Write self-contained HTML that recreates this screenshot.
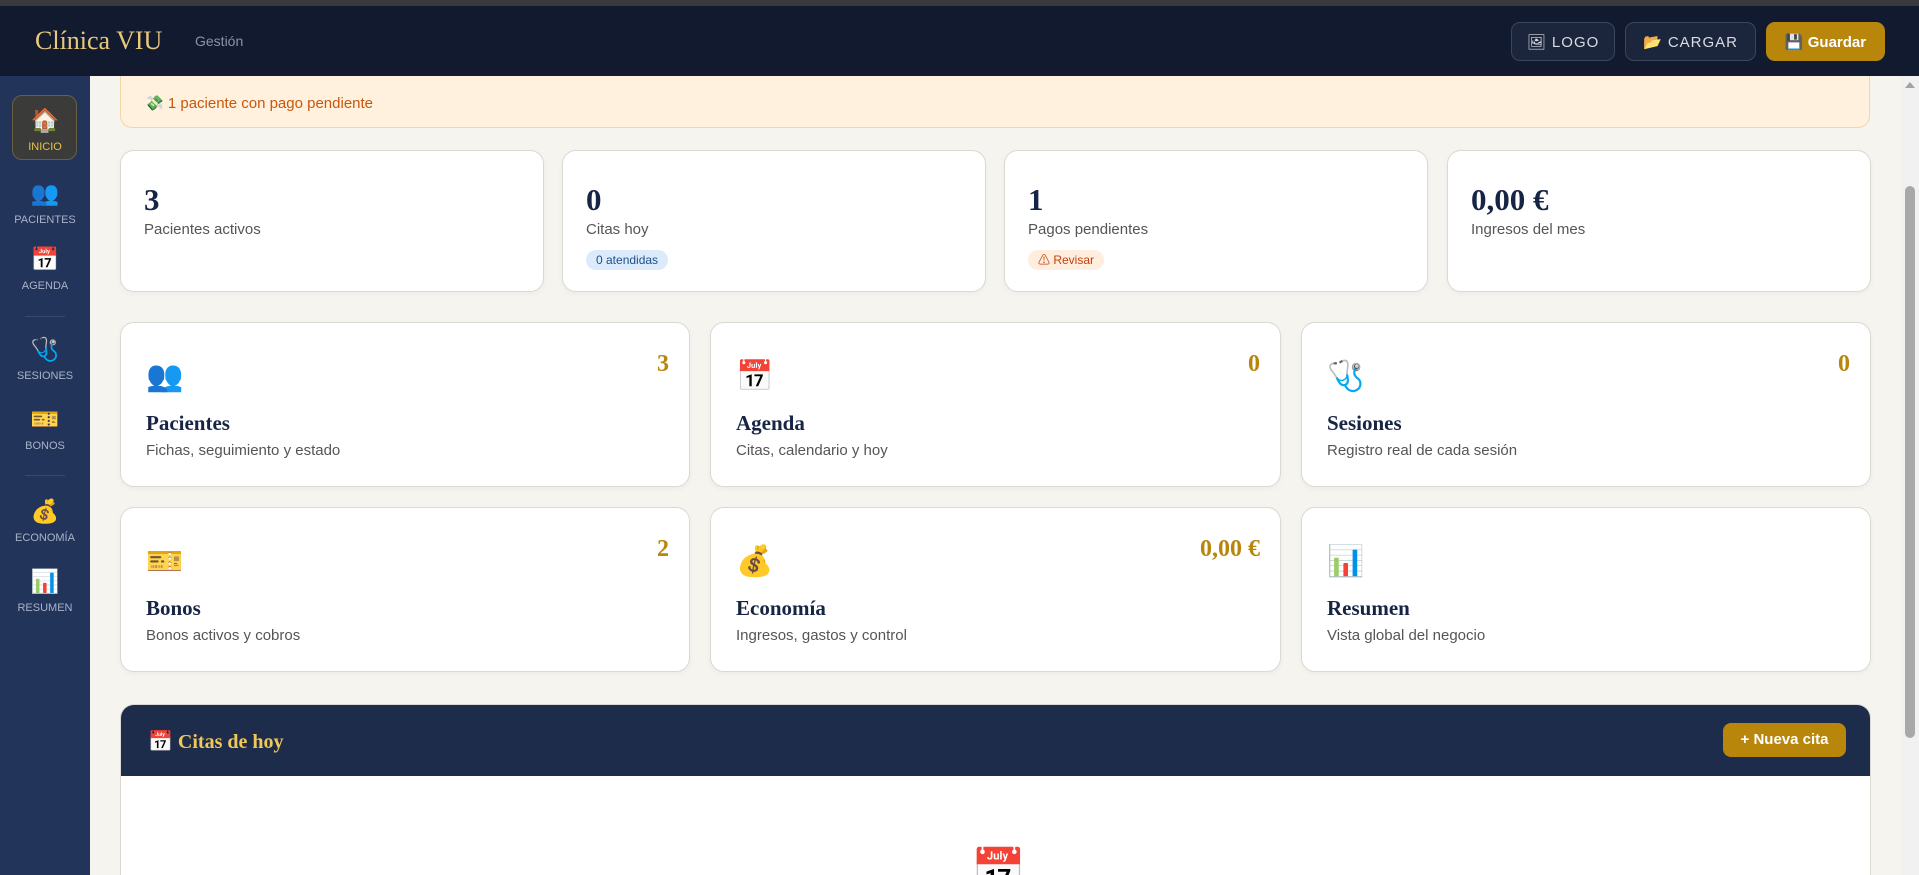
<!DOCTYPE html>
<html><head><meta charset="utf-8"><style>
*{box-sizing:border-box;margin:0;padding:0}
html{width:1919px;height:875px;overflow:hidden}
body{width:1919px;height:875px;overflow:hidden;background:#f6f4ef;font-family:"Liberation Sans","Noto Sans CJK JP",sans-serif;position:relative}
.abs{position:absolute}
.serif{font-family:"Liberation Serif",serif;font-weight:bold}
.topbar{left:0;top:0;width:1919px;height:6px;background:#3a3a3a}
.header{left:0;top:6px;width:1919px;height:70px;background:#111a2e}
.btn{position:absolute;top:16px;height:39px;border-radius:9px;border:1px solid #3a4660;background:#1b263c;color:#d8dce4;font-size:15px;letter-spacing:1px;display:flex;align-items:center;justify-content:center;gap:7px}
.side{left:0;top:76px;width:90px;height:799px;background:#22345a}
.si{position:absolute;left:0;width:90px;text-align:center;color:#a9b3c8;font-size:11px}
.ico{font-size:23px;line-height:28px;display:block;margin-bottom:7px}
.div{position:absolute;left:25px;width:40px;height:1px;background:#3a4a6e}
.card{position:absolute;background:#fff;border:1px solid #dcd9d2;border-radius:14px;box-shadow:0 2px 6px rgba(0,0,0,.04)}
.num{position:absolute;left:23px;top:31px;font-size:31px;color:#172544}
.lab{position:absolute;left:23px;top:70px;font-size:15px;color:#555}
.badge{position:absolute;left:23px;top:99px;height:20px;padding:0 10px;border-radius:10px;font-size:12px;line-height:20px}
.mi{position:absolute;left:25px;top:36px;font-size:30px}
.mt{position:absolute;left:25px;top:88px;font-size:21px;color:#172544}
.md{position:absolute;left:25px;top:119px;font-size:15px;color:#555}
.mc{position:absolute;right:20px;top:28px;font-size:24px;color:#b8860b}
</style></head><body>
<div class="abs topbar"></div>
<div class="abs header">
 <div class="abs" style="left:35px;top:20px;font-family:'Liberation Serif',serif;font-size:26px;color:#e8c87a">Clínica VIU</div>
 <div class="abs" style="left:195px;top:27px;font-size:14px;color:#8a93a6">Gestión</div>
 <div class="btn" style="left:1511px;width:104px">🖼 LOGO</div>
 <div class="btn" style="left:1625px;width:131px">📂 CARGAR</div>
 <div class="btn" style="left:1766px;width:119px;background:#b8860b;border-color:#b8860b;color:#fff;font-weight:bold;letter-spacing:0">💾 Guardar</div>
</div>
<div class="abs side">
 <div class="abs" style="left:12px;top:19px;width:65px;height:65px;border-radius:10px;background:#3b3c3a;border:1px solid #6d5f3c"></div>
 <div class="si" style="top:30px;color:#e8c34a"><span class="ico">🏠</span>INICIO</div>
 <div class="si" style="top:103px"><span class="ico">👥</span>PACIENTES</div>
 <div class="si" style="top:169px"><span class="ico">📅</span>AGENDA</div>
 <div class="div" style="top:240px"></div>
 <div class="si" style="top:259px"><span class="ico">🩺</span>SESIONES</div>
 <div class="si" style="top:329px"><span class="ico">🎫</span>BONOS</div>
 <div class="div" style="top:399px"></div>
 <div class="si" style="top:421px"><span class="ico">💰</span>ECONOMÍA</div>
 <div class="si" style="top:491px"><span class="ico">📊</span>RESUMEN</div>
</div>
<div class="abs" style="left:120px;top:76px;width:1750px;height:52px;background:#fff1de;border:1px solid #f2d6a6;border-top:none;border-radius:0 0 12px 12px;color:#c8570c;font-size:15px;padding:18px 0 0 24px">💸 1 paciente con pago pendiente</div>

<div class="card" style="left:120px;top:150px;width:424px;height:142px"><div class="num serif">3</div><div class="lab">Pacientes activos</div></div>
<div class="card" style="left:562px;top:150px;width:424px;height:142px"><div class="num serif">0</div><div class="lab">Citas hoy</div><div class="badge" style="background:#dcebfb;color:#1d4f8a">0 atendidas</div></div>
<div class="card" style="left:1004px;top:150px;width:424px;height:142px"><div class="num serif">1</div><div class="lab">Pagos pendientes</div><div class="badge" style="background:#ffeedd;color:#c2410c">⚠ Revisar</div></div>
<div class="card" style="left:1447px;top:150px;width:424px;height:142px"><div class="num serif">0,00 €</div><div class="lab">Ingresos del mes</div></div>

<div class="card" style="left:120px;top:322px;width:570px;height:165px"><div class="mi">👥</div><div class="mc serif">3</div><div class="mt serif">Pacientes</div><div class="md">Fichas, seguimiento y estado</div></div>
<div class="card" style="left:710px;top:322px;width:571px;height:165px"><div class="mi">📅</div><div class="mc serif">0</div><div class="mt serif">Agenda</div><div class="md">Citas, calendario y hoy</div></div>
<div class="card" style="left:1301px;top:322px;width:570px;height:165px"><div class="mi">🩺</div><div class="mc serif">0</div><div class="mt serif">Sesiones</div><div class="md">Registro real de cada sesión</div></div>
<div class="card" style="left:120px;top:507px;width:570px;height:165px"><div class="mi">🎫</div><div class="mc serif">2</div><div class="mt serif">Bonos</div><div class="md">Bonos activos y cobros</div></div>
<div class="card" style="left:710px;top:507px;width:571px;height:165px"><div class="mi">💰</div><div class="mc serif">0,00 €</div><div class="mt serif">Economía</div><div class="md">Ingresos, gastos y control</div></div>
<div class="card" style="left:1301px;top:507px;width:570px;height:165px"><div class="mi">📊</div><div class="mt serif">Resumen</div><div class="md">Vista global del negocio</div></div>

<div class="abs" style="left:120px;top:704px;width:1751px;height:171px;background:#fff;border:1px solid #dcd9d2;border-bottom:none;border-radius:14px 14px 0 0;overflow:hidden">
 <div class="abs" style="left:0;top:0;width:100%;height:71px;background:#1d2c4a"></div>
 <div class="abs serif" style="left:27px;top:24px;font-size:20px;color:#f0c85a">📅 Citas de hoy</div>
 <div class="abs" style="left:1602px;top:18px;width:123px;height:34px;border-radius:8px;background:#b8860b;color:#fff;font-size:15px;font-weight:bold;line-height:34px;text-align:center">+ Nueva cita</div>
 <div class="abs" style="left:850px;top:142px;font-size:44px;line-height:50px">📅</div>
</div>

<div class="abs" style="left:1901px;top:76px;width:18px;height:799px;background:#f1f1f1"></div>
<div class="abs" style="left:1905px;top:82px;width:0;height:0;border-left:5px solid transparent;border-right:5px solid transparent;border-bottom:6px solid #a3a3a3"></div>
<div class="abs" style="left:1905px;top:186px;width:10px;height:552px;border-radius:5px;background:#a8a8a8"></div>
</body></html>
